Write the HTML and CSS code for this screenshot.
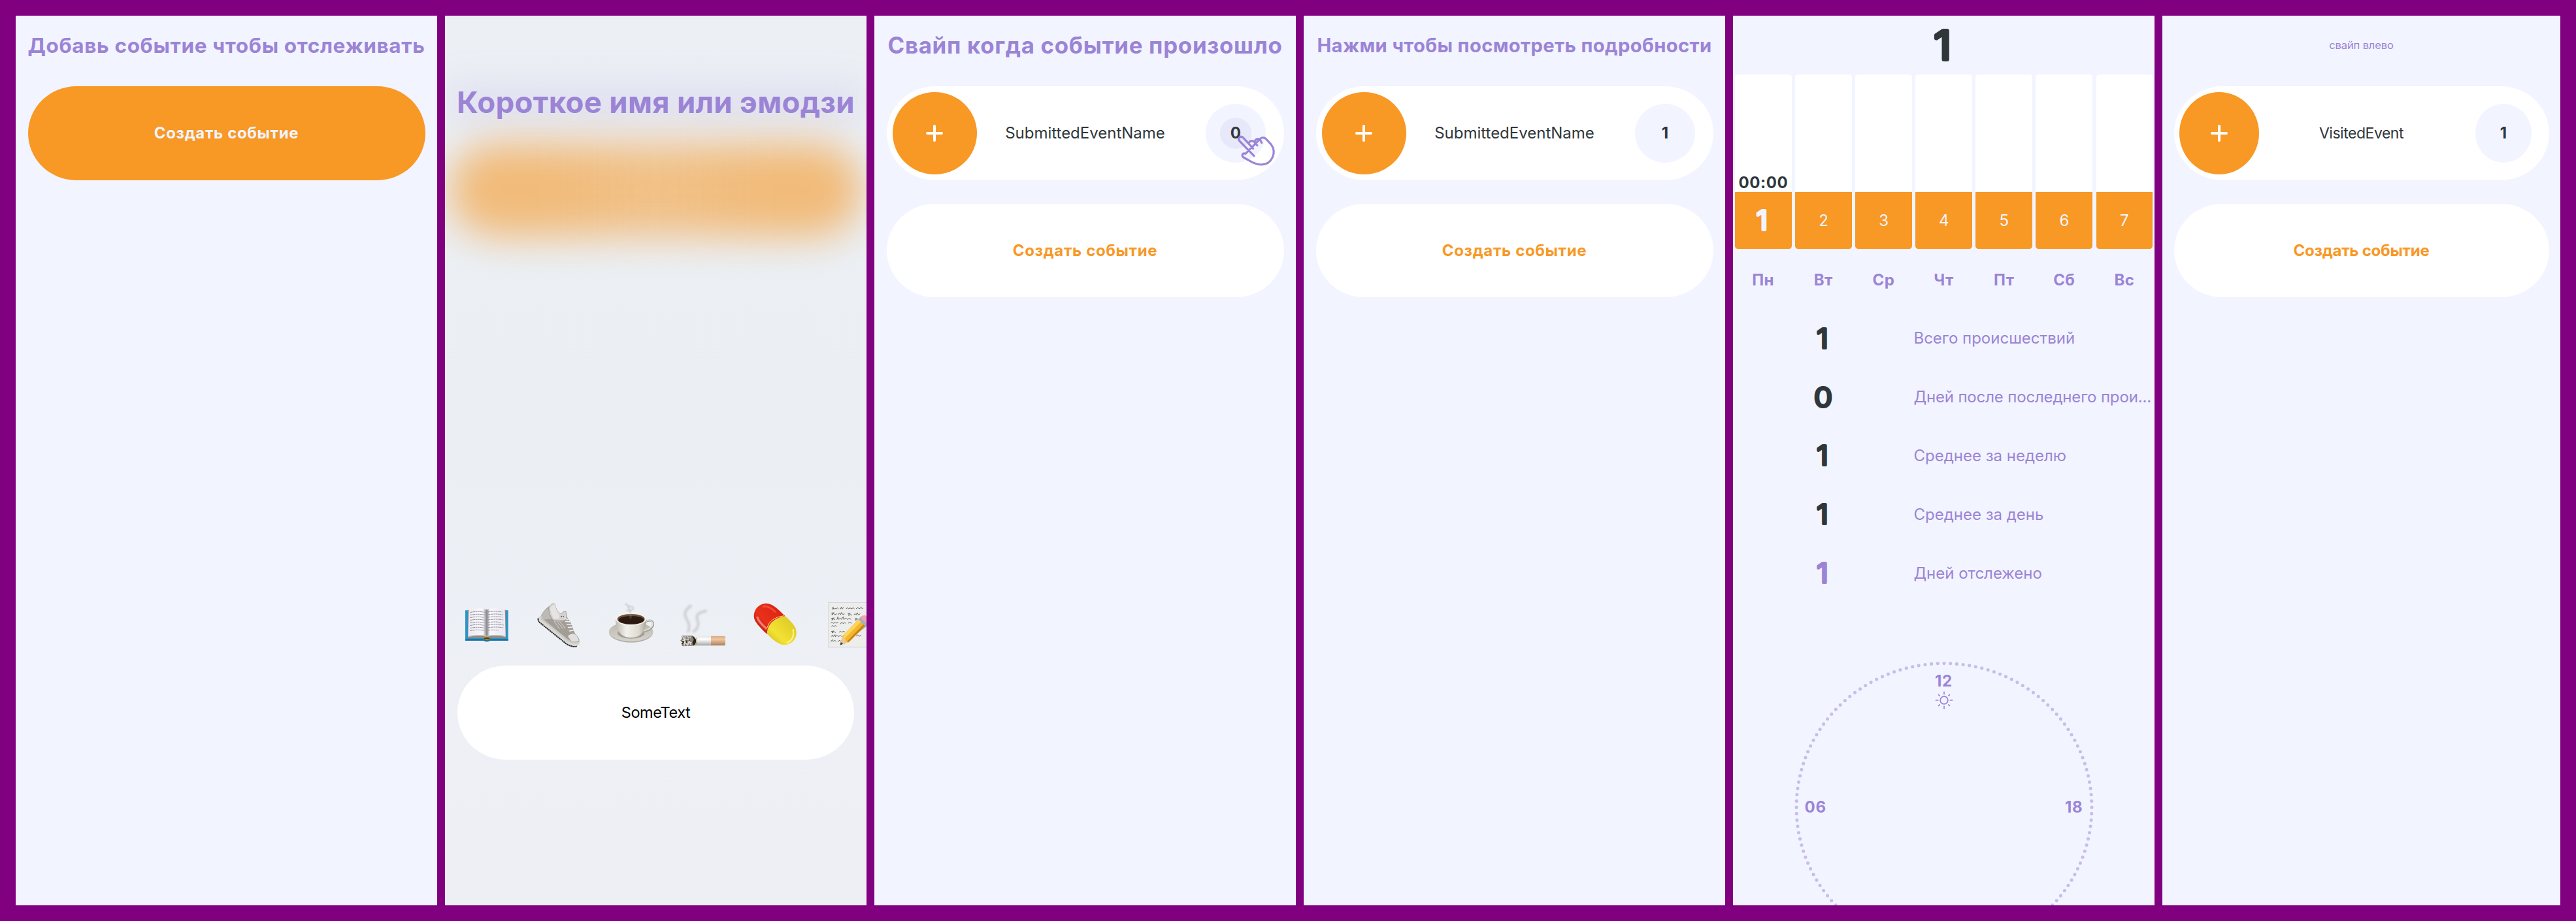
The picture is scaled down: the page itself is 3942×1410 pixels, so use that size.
FILE: index.html
```html
<!DOCTYPE html>
<html lang="ru">
<head>
<meta charset="utf-8">
<title>События</title>
<link rel="stylesheet" href="styles.css">
</head>
<body>
<main class="board">

  <section class="screen">
    <h1 class="hint hint-add">Добавь событие чтобы отслеживать</h1>
    <div class="list">
      <button class="pill pill-accent"><span class="action">Создать событие</span></button>
    </div>
  </section>

  <section class="screen screen-input">
    <div class="glow glow-title"></div>
    <div class="glow glow-pill"></div>
    <h1 class="hint hint-name">Короткое имя или эмодзи</h1>
    <div class="emoji-row">
      <svg class="emoji" viewBox="31 22 210 210">
        <defs>
          <linearGradient id="pageL" x1="0" x2="1"><stop offset="0" stop-color="#eceaf2"/><stop offset=".8" stop-color="#f8f7fb"/><stop offset="1" stop-color="#8d8b90"/></linearGradient>
          <linearGradient id="pageR" x1="0" x2="1"><stop offset="0" stop-color="#8d8b90"/><stop offset=".15" stop-color="#f8f7fb"/><stop offset="1" stop-color="#e9e7f0"/></linearGradient>
        </defs>
        <path d="M37 59H234V198H150Q136 207 122 198H37Z" fill="#2f94c4"/>
        <path d="M37 191H234V198H150Q136 207 122 198H37Z" fill="#1f6f9b"/>
        <path d="M49 57V187H122Q136 196 150 187H223V57Z" fill="#8e8c8a"/>
        <path d="M53 53Q100 42 135 56V176Q96 168 50 178Z" fill="url(#pageL)"/>
        <path d="M137 56Q172 42 219 53L222 178Q176 168 137 176Z" fill="url(#pageR)"/>
        <path d="M50 179Q96 169 135 178M137 178Q176 169 222 179" stroke="#cfcdca" stroke-width="4" fill="none"/>
        <g stroke="#77757d" stroke-width="2.4" stroke-dasharray="9 2 14 2 6 2" fill="none">
          <path d="M58 69Q95 61 130 69M58 81Q95 73 130 81M58 93Q95 85 124 93M58 105Q95 97 130 105M58 117Q95 109 130 117M58 129Q95 121 126 129M58 141Q95 133 130 141M58 153Q95 145 128 153"/>
          <path d="M142 67Q170 61 206 67M142 79Q175 73 210 79M142 91Q175 85 208 91M142 103Q175 97 212 103M142 115Q175 109 200 115M142 127Q175 121 214 127M142 139Q175 133 212 139M142 151Q165 147 190 151"/>
        </g>
        <path d="M118 186Q136 178 154 186Q150 196 136 197Q122 196 118 186Z" fill="#96852c"/>
        <path d="M124 190Q136 184 148 190" stroke="#3b3a20" stroke-width="4" fill="none"/>
      </svg>
      <svg class="emoji" viewBox="362 22 210 210">
        <path d="M369 90Q366 104 374 112L500 214Q530 232 548 224Q564 216 561 202L540 196L400 98L384 84Z" fill="#d9d8d4"/>
        <path d="M370 96Q368 106 374 113L500 214Q530 231 548 224" stroke="#2b2b2b" stroke-width="6" stroke-dasharray="7 2" fill="none"/>
        <path d="M384 80C396 56 420 40 434 27Q444 22 449 34C452 52 462 74 478 74C484 62 497 56 499 66L501 88L520 118C534 146 532 160 546 174Q562 190 558 202Q546 216 520 206C484 186 440 140 396 108Q378 96 384 80Z" fill="#a39d98"/>
        <path d="M420 42Q436 24 444 27Q450 34 452 48Q460 74 478 76Q490 62 496 64L498 90L494 104L438 102Q420 80 420 42Z" fill="#d5d3d1"/>
        <path d="M424 50Q438 34 446 34Q450 60 466 78L464 98L440 98Q430 74 424 50Z" fill="#e6e4e2"/>
        <path d="M386 78Q398 58 416 48Q420 80 430 98L394 102Q380 94 386 78Z" fill="#bdb9b5"/>
        <path d="M386 84Q380 96 398 108L500 192Q530 212 554 206" stroke="#c9c6c2" stroke-width="7" fill="none"/>
        <path d="M506 178Q520 164 538 168Q556 186 556 198Q542 208 520 198Z" fill="#e2e0de"/>
        <g stroke="#f1f0ee" stroke-width="5" stroke-linecap="round"><path d="M494 96L506 102M496 110L514 112M502 124L522 124M508 138L528 136M514 154L532 150"/></g>
        <g stroke="#dad7d4" stroke-width="3" fill="none"><path d="M442 108L468 144M454 108L484 144M468 110L494 142M442 108H486"/></g>
        <circle cx="476" cy="87" r="2.5" fill="#444"/><circle cx="485" cy="87" r="2.5" fill="#444"/>
      </svg>
      <svg class="emoji" viewBox="692 22 210 210">
        <defs>
          <linearGradient id="cup" x1="0" x2="1"><stop offset="0" stop-color="#bdb9b0"/><stop offset=".35" stop-color="#f3f1ec"/><stop offset=".75" stop-color="#dedad2"/><stop offset="1" stop-color="#a9a59c"/></linearGradient>
          <linearGradient id="dish" x1="0" y1="0" x2="0" y2="1"><stop offset="0" stop-color="#bab7af"/><stop offset="1" stop-color="#d6d3cc"/></linearGradient>
          <filter id="steam" x="-50%" y="-50%" width="200%" height="200%"><feGaussianBlur stdDeviation="3"/></filter>
        </defs>
        <ellipse cx="796" cy="160" rx="101" ry="47" fill="#b3afa6"/>
        <ellipse cx="796" cy="157" rx="101" ry="45" fill="url(#dish)"/>
        <ellipse cx="796" cy="164" rx="62" ry="25" fill="#a19d93"/>
        <path d="M862 112Q892 98 897 118Q900 146 856 156" stroke="#a5a198" stroke-width="9" fill="none"/>
        <path d="M862 111Q890 98 895 118Q897 142 856 153" stroke="#e6e3dc" stroke-width="4" fill="none"/>
        <path d="M725 98C725 140 740 184 796 185C852 184 867 140 867 98Z" fill="url(#cup)"/>
        <ellipse cx="796" cy="98" rx="71" ry="31" fill="#f4f2ed"/>
        <ellipse cx="796" cy="100" rx="63" ry="24" fill="#6b5137"/>
        <ellipse cx="797" cy="104" rx="58" ry="19" fill="#2c1a12"/>
        <path d="M768 34Q780 26 782 42Q806 38 808 52Q796 64 774 58M782 42Q796 62 794 96" stroke="#a9abb0" stroke-width="5" fill="none" opacity=".6" filter="url(#steam)"/>
      </svg>
      <svg class="emoji" viewBox="66 22 210 210">
        <defs>
          <linearGradient id="paper" x1="0" y1="0" x2="0" y2="1"><stop offset="0" stop-color="#e4e4e6"/><stop offset=".35" stop-color="#fff"/><stop offset="1" stop-color="#a5a5a8"/></linearGradient>
          <linearGradient id="filterTip" x1="0" y1="0" x2="0" y2="1"><stop offset="0" stop-color="#d9a97e"/><stop offset=".35" stop-color="#f0c8a2"/><stop offset="1" stop-color="#a97d58"/></linearGradient>
          <filter id="smoke" x="-50%" y="-20%" width="200%" height="140%"><feGaussianBlur stdDeviation="5"/></filter>
        </defs>
        <path d="M118 36C78 62 84 84 100 108Q114 134 100 160M188 62C140 66 136 90 148 112Q152 140 124 160" stroke="#c9cbcf" stroke-width="13" fill="none" opacity=".8" filter="url(#smoke)"/>
        <rect x="122" y="177" width="88" height="44" fill="url(#paper)"/>
        <path d="M207 177H268Q273 177 273 184V215Q273 221 268 221H207Z" fill="url(#filterTip)"/>
        <path d="M72 176L120 175Q142 186 138 206Q136 220 120 222L76 224L70 212L76 206L66 198L74 190Z" fill="#8a857c"/>
        <path d="M76 178L98 219M88 178L84 222M100 178L114 218M112 180L100 222M76 198L112 192M82 212L118 206" stroke="#e2ded5" stroke-width="4" fill="none"/>
        <path d="M72 200L82 204L74 214M92 196L96 210M106 186L108 200" stroke="#26241f" stroke-width="4" fill="none"/>
        <path d="M120 176Q144 188 137 208Q134 218 124 222L122 206L128 194Z" fill="#2c2418"/>
        <path d="M140 186Q146 200 138 216" stroke="#a98a4a" stroke-width="3" fill="none"/>
      </svg>
      <svg class="emoji" viewBox="397 22 210 210">
        <defs>
          <linearGradient id="red" x1="0" y1="1" x2="1" y2="0"><stop offset="0" stop-color="#a5180d"/><stop offset=".4" stop-color="#e9301b"/><stop offset="1" stop-color="#d8200f"/></linearGradient>
          <linearGradient id="yellow" x1="0" y1="1" x2="1" y2="0"><stop offset="0" stop-color="#c9b216"/><stop offset=".35" stop-color="#f3e234"/><stop offset="1" stop-color="#d9c41f"/></linearGradient>
        </defs>
        <path d="M546 86C520 62 494 28 456 27C414 30 390 74 408 108C422 130 442 150 464 170Q466 100 546 86Z" fill="url(#red)"/>
        <path d="M546 86C566 104 582 120 592 138C608 176 586 214 546 218C516 220 486 192 462 166Q464 104 546 86Z" fill="url(#yellow)"/>
        <path d="M462 140Q476 92 540 84" stroke="#f6ec70" stroke-width="3" fill="none"/>
        <path d="M418 92Q424 112 458 142" stroke="#f79a8c" stroke-width="10" stroke-linecap="round" fill="none" opacity=".75"/>
        <path d="M582 148Q590 192 556 206" stroke="#fbf6b4" stroke-width="7" stroke-linecap="round" fill="none" opacity=".8"/>
        <path d="M444 42Q470 36 500 66" stroke="#f4604c" stroke-width="8" stroke-linecap="round" fill="none" opacity=".7"/>
      </svg>
      <svg class="emoji" viewBox="728 22 210 210">
        <rect x="744" y="22" width="208" height="208" fill="#d6d6d6"/>
        <rect x="747" y="25" width="205" height="202" fill="#ededec"/>
        <g stroke="#4c4c4c" stroke-width="2.6" fill="none">
          <path d="M762 56l4-12 4 10 5-5 5 4 6-5 6 5M800 54l5-10 2 8 8-5M826 52l6-5 5 5 8-4 6 4 8-5 6 6M872 52l8-6 6 6 8-5 10 4"/>
          <path d="M758 72l14-2M764 70l-3 10 8-6 7 5 8-4M790 80l5-8 6 7 4-10 6 9 8-3M834 74l12-1M840 74l-2 9 9-5 6 4M862 80l5-6 6 6 4-10 6 10 8-5"/>
          <path d="M758 96l14-2M764 95l-3 9 8-6 7 5M784 102l4-12 5 11 7-6 5 6 8-12 3 12 9-6 7 6 9-5 8 5M866 98l12-2M872 97l-2 8 10-6"/>
          <path d="M756 118l7-4 6 5 8-6 6 5 8-4M800 122l6-8 6 6 8-5 5 5M836 118l8-4 8 5"/>
          <path d="M758 134l6-6 5 6 8-5 6 5M758 156l13-2M764 155l-2 8 9-6 7 5M794 160l7-5 6 5 8-5 6 4"/>
          <path d="M758 180l6-7 3 7 8-9 2 9 8-7 7 7 8-6 6 6M756 204l7-10 4 8 7-5 7 5M790 204l6-8 6 6 5-6M872 178l8-6 8 6 8-5"/>
        </g>
        <path d="M806 222L830 206L920 116V132Z" fill="#6f6f6f" opacity=".55"/>
        <path d="M799 219L808 178L838 206Z" fill="#ecc994"/>
        <path d="M799 219L802 205L812 213Z" fill="#333"/>
        <path d="M808 178L884 100L914 130L838 206L824 200L820 188Z" fill="#f5b62b"/>
        <path d="M814 172L890 98L898 108L820 188Z" fill="#fcd75a"/>
        <path d="M838 206L914 130L908 122L830 202Z" fill="#c98512"/>
        <path d="M882 100L892 90L924 122L914 132Z" fill="#9fb1c6"/>
        <path d="M890 92Q904 76 922 86L940 104L924 122Z" fill="#f0a3b1"/>
      </svg>
    </div>
    <div class="pill pill-input"><span class="event-name">SomeText</span></div>
  </section>

  <section class="screen">
    <h1 class="hint hint-swipe">Свайп когда событие произошло</h1>
    <div class="list">
      <div class="pill pill-event">
        <div class="plus"><svg viewBox="0 0 26 26"><path d="M13 2v22M2 13h22"/></svg></div>
        <span class="event-name">SubmittedEventName</span>
        <div class="count count-pressed"><span>0</span>
          <svg class="hand" viewBox="216 198 186 150"><path d="M297 296L229 226C221 213 236 202 247 212L293 262M273 238C278 224 292 224 299 233L312 248M299 232C304 216 318 214 326 223L332 236M322 221C330 210 344 209 353 219L376 244C402 280 380 336 330 336C314 336 302 332 290 326L249 303C238 294 244 281 258 286Z"/></svg>
        </div>
      </div>
      <button class="pill"><span class="action">Создать событие</span></button>
    </div>
  </section>

  <section class="screen">
    <h1 class="hint hint-tap">Нажми чтобы посмотреть подробности</h1>
    <div class="list">
      <div class="pill pill-event">
        <div class="plus"><svg viewBox="0 0 26 26"><path d="M13 2v22M2 13h22"/></svg></div>
        <span class="event-name">SubmittedEventName</span>
        <div class="count"><span>1</span></div>
      </div>
      <button class="pill"><span class="action">Создать событие</span></button>
    </div>
  </section>

  <section class="screen">
    <header class="total"><svg class="round-digit round-digit-xl" viewBox="-30 0 60 80"><text x="-2" y="62.3">1</text></svg></header>
    <div class="week">
      <div class="day"><div class="day-body"><span class="day-time">00:00</span></div><div class="day-cell"><svg class="round-digit" viewBox="-20 0 40 50"><text x="-1.5" y="40">1</text></svg></div></div>
      <div class="day"><div class="day-body"></div><div class="day-cell">2</div></div>
      <div class="day"><div class="day-body"></div><div class="day-cell">3</div></div>
      <div class="day"><div class="day-body"></div><div class="day-cell">4</div></div>
      <div class="day"><div class="day-body"></div><div class="day-cell">5</div></div>
      <div class="day"><div class="day-body"></div><div class="day-cell">6</div></div>
      <div class="day"><div class="day-body"></div><div class="day-cell">7</div></div>
    </div>
    <div class="weekdays"><span>Пн</span><span>Вт</span><span>Ср</span><span>Чт</span><span>Пт</span><span>Сб</span><span>Вс</span></div>
    <dl class="stats">
      <dd><svg class="round-digit" viewBox="-20 0 40 50"><text x="-1" y="40">1</text></svg></dd><dt>Всего происшествий</dt>
      <dd><svg class="round-digit" viewBox="-20 0 40 50"><text x="0" y="40">0</text></svg></dd><dt class="stat-long">Дней после последнего прои...</dt>
      <dd><svg class="round-digit" viewBox="-20 0 40 50"><text x="-1" y="40">1</text></svg></dd><dt>Среднее за неделю</dt>
      <dd><svg class="round-digit" viewBox="-20 0 40 50"><text x="-1" y="40">1</text></svg></dd><dt>Среднее за день</dt>
      <dd class="stat-soft"><svg class="round-digit" viewBox="-20 0 40 50"><text x="-1" y="40">1</text></svg></dd><dt>Дней отслежено</dt>
    </dl>
    <div class="clock">
      <svg class="clock-ring" viewBox="0 0 460 446"><ellipse cx="230" cy="223" rx="226" ry="220.4" pathLength="144"/></svg>
      <div class="clock-noon"><span>12</span>
        <svg class="sun" viewBox="-14 -14 28 28"><circle r="5.9"/><path d="M0-12.6V-9.4M0 9.4V12.6M-12.6 0H-9.4M9.4 0H12.6M-8.4-8.4L-6.8-6.8M8.4-8.4L6.8-6.8M-8.4 8.4L-6.8 6.8M8.4 8.4L6.8 6.8"/></svg>
      </div>
      <div class="clock-sides"><span>06</span><span>18</span></div>
    </div>
  </section>

  <section class="screen screen-narrow">
    <h1 class="hint hint-left">свайп влево</h1>
    <div class="list">
      <div class="pill pill-event">
        <div class="plus"><svg viewBox="0 0 26 26"><path d="M13 2v22M2 13h22"/></svg></div>
        <span class="event-name">VisitedEvent</span>
        <div class="count"><span>1</span></div>
      </div>
      <button class="pill"><span class="action">Создать событие</span></button>
    </div>
  </section>

</main>
</body>
</html>
```
FILE: styles.css
```css
* { box-sizing: border-box; }

body {
  margin: 0;
  background: #800080;
  font-family: Inter, "Liberation Sans", sans-serif;
  font-size: 24px;
  color: #2f373b;
}

.board {
  display: flex;
  gap: 12px;
  width: 3942px;
  height: 1410px;
  padding: 24px;
}

.screen {
  position: relative;
  display: flex;
  flex-direction: column;
  flex: none;
  width: 645px;
  overflow: hidden;
  background: #f2f4ff;
}

.screen > * { flex-shrink: 0; }

.hint {
  display: flex;
  align-items: center;
  justify-content: center;
  height: 90px;
  margin: 0;
  font-weight: 700;
  color: #9b84d6;
  white-space: nowrap;
}

.hint-add { font-size: 31.5px; letter-spacing: .65px; }
.hint-name { font-size: 45.5px; letter-spacing: .33px; margin-top: 87px; }
.hint-swipe { font-size: 34.8px; letter-spacing: .72px; }
.hint-tap { font-size: 29.2px; letter-spacing: .38px; }
.hint-left { font-size: 16.5px; letter-spacing: -.13px; font-weight: 400; }

.list {
  display: flex;
  flex-direction: column;
  gap: 36px;
  padding: 18px 18.5px 0;
}

.pill {
  display: flex;
  align-items: center;
  justify-content: center;
  height: 143.5px;
  padding: 0;
  border: 0;
  border-radius: 74px / 72px;
  background: #fff;
  font: inherit;
  color: #f89825;
  white-space: nowrap;
}

.action { font-weight: 700; letter-spacing: .65px; }
.pill-accent { background: #f89825; color: #f2f4ff; }
.pill-input { margin: 27px 19px 0; font-size: 23.5px; letter-spacing: -.46px; color: #000; }

.pill-event {
  display: grid;
  grid-template-columns: 129.2px 1fr 129.2px;
  align-items: center;
  justify-items: center;
  padding: 0 9px;
  color: #2f373b;
}

.event-name { font-weight: 400; }

.plus {
  display: grid;
  place-items: center;
  width: 100%;
  height: 126px;
  border-radius: 50%;
  background: #f89825;
}

.plus svg { width: 26px; height: 26px; }
.plus path { fill: none; stroke: #fff; stroke-width: 4; stroke-linecap: round; }

.count {
  position: relative;
  display: grid;
  place-items: center;
  width: 92px;
  height: 90px;
  border-radius: 50%;
  background: #f2f4ff;
  font-weight: 700;
}

.count-pressed { background: radial-gradient(ellipse 24.5px 24px, #e7e8fa 97%, #f2f4ff 100%); }

.hand {
  position: absolute;
  left: 47px;
  top: 47.3px;
  width: 62px;
  height: 50px;
}

.hand path { fill: none; stroke: #9b84d6; stroke-width: 9.5; stroke-linecap: round; stroke-linejoin: round; }

/* name entry */
.screen-input { background: linear-gradient(#ecf0f5, #ebeff4 50%, #eef0f6 80%, #edeff5); }
.glow { position: absolute; left: 6px; right: 6px; }
.glow-title { top: 100px; height: 60px; background: rgba(155, 132, 214, .13); filter: blur(24px); }

.glow-pill {
  top: 195px;
  height: 144px;
  border-radius: 72px;
  background: linear-gradient(90deg, rgba(245, 152, 40, .6) 25%, rgba(245, 152, 40, .54) 45% 55%, rgba(245, 152, 40, .6) 75%);
  filter: blur(30px);
}

.screen-input .hint, .emoji-row, .pill-input { position: relative; }

.emoji-row {
  display: flex;
  gap: 40.4px;
  margin-top: 721px;
  padding-left: 29.3px;
}

.emoji { flex: none; width: 70px; height: 70px; }

/* event details */
.total { display: grid; place-items: center; height: 90px; }
.round-digit { width: 40px; height: 50px; overflow: visible; }

.round-digit text {
  font-size: 41px;
  font-weight: 300;
  text-anchor: middle;
  transform: scaleX(1.1);
  fill: currentColor;
  stroke: currentColor;
  stroke-width: 4.1;
  stroke-linejoin: round;
}

.round-digit-xl { width: 60px; height: 80px; }
.round-digit-xl text { font-size: 61px; stroke-width: 6.1; }

.week {
  display: grid;
  grid-template-columns: repeat(7, 1fr);
  gap: 5.3px;
  height: 267px;
  padding: 0 2.7px 0 3px;
}

.day {
  display: flex;
  flex-direction: column;
  overflow: hidden;
  border-radius: 4.5px;
}

.day-body {
  display: flex;
  align-items: flex-end;
  justify-content: center;
  height: 179.5px;
  background: #fff;
}

.day-time { font-weight: 700; letter-spacing: .6px; }

.day-cell {
  display: grid;
  place-items: center;
  flex: 1;
  background: #f89825;
  color: #f2f4ff;
}

.weekdays {
  display: grid;
  grid-template-columns: repeat(7, 1fr);
  align-items: center;
  justify-items: center;
  height: 92px;
  padding-top: 2px;
  font-weight: 700;
  letter-spacing: .4px;
  color: #9b84d6;
}

.stats {
  display: grid;
  grid-template-columns: 3fr 4fr;
  grid-auto-rows: 89.8px;
  align-items: center;
  margin: 0;
  color: #9b84d6;
  white-space: nowrap;
}

.stats dd { display: grid; place-items: center; margin: 0; color: #2f373b; }
.stats .stat-soft { color: #9b84d6; }
.stat-long { letter-spacing: -.16px; }

.clock {
  position: relative;
  width: 460px;
  height: 446px;
  margin: 90.7px auto 0;
  color: #9b84d6;
  font-weight: 700;
  letter-spacing: .8px;
}

.clock-ring { position: absolute; inset: 0; width: 100%; height: 100%; }

.clock-ring ellipse {
  fill: none;
  stroke: #c8bdea;
  stroke-width: 5.1;
  stroke-linecap: round;
  stroke-dasharray: 0 1;
}

.clock-noon { display: flex; flex-direction: column; align-items: center; padding-top: 15px; }
.sun { width: 28px; height: 28px; margin-top: 1px; }
.sun circle, .sun path { fill: none; stroke: #9b84d6; stroke-width: 1.7; stroke-linecap: round; }

.clock-sides {
  position: absolute;
  inset: 0;
  display: flex;
  align-items: center;
  justify-content: space-between;
  padding: 0 17px;
}

/* last screen is narrower than the others */
.screen-narrow { width: 609px; }
.screen-narrow .list { padding-left: 17.5px; padding-right: 17.5px; }
.screen-narrow .pill-event { grid-template-columns: 122px 1fr 122px; padding: 0 8.5px; }
.screen-narrow .event-name { font-size: 23px; letter-spacing: -.47px; }
.screen-narrow .count { width: 86.5px; }
.screen-narrow .action { letter-spacing: -.24px; }
```
